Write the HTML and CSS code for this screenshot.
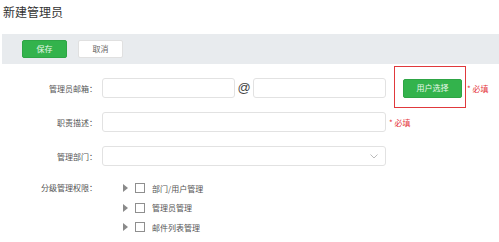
FILE: index.html
```html
<!DOCTYPE html>
<html>
<head>
<meta charset="utf-8">
<link rel="stylesheet" href="styles.css">
</head>
<body>
<h1 class="title">新建管理员</h1>
<div class="toolbar">
  <button class="btn btn-green">保存</button>
  <button class="btn btn-white">取消</button>
</div>
<div class="form">
  <div class="row">
    <label class="lbl">管理员邮箱：</label>
    <input class="inp inp-half" type="text">
    <span class="at">@</span>
    <input class="inp inp-half" type="text">
    <div class="pick-wrap">
      <button class="btn btn-green btn-pick">用户选择</button>
      <span class="highlight"></span>
    </div>
    <span class="req">* 必填</span>
  </div>
  <div class="row">
    <label class="lbl">职责描述：</label>
    <input class="inp inp-full" type="text">
    <span class="req req-near">* 必填</span>
  </div>
  <div class="row">
    <label class="lbl">管理部门：</label>
    <div class="inp inp-full select">
      <svg class="chev" width="8" height="5" viewBox="0 0 8 5"><path d="M0.5 0.5 L4 4 L7.5 0.5" fill="none" stroke="#bbb" stroke-width="1"/></svg>
    </div>
  </div>
  <div class="row row-top">
    <label class="lbl lbl-perm">分级管理权限：</label>
    <ul class="tree">
      <li><span class="tri"></span><span class="cb"></span><span class="txt">部门/用户管理</span></li>
      <li><span class="tri"></span><span class="cb"></span><span class="txt">管理员管理</span></li>
      <li><span class="tri"></span><span class="cb"></span><span class="txt">邮件列表管理</span></li>
    </ul>
  </div>
</div>
</body>
</html>
```

FILE: styles.css
```css
* { box-sizing: border-box; }
body {
  margin: 0;
  background: #fff;
  font-family: "Noto Sans CJK SC", "Liberation Sans", sans-serif;
  color: #555;
  width: 499px;
  height: 242px;
  overflow: hidden;
}
.title {
  margin: 0;
  padding: 3px 0 0 3px;
  height: 34px;
  font-size: 12px;
  line-height: 18px;
  font-weight: normal;
  color: #333;
}
.toolbar {
  margin-left: 2px;
  height: 30px;
  background: #e8ebee;
  display: flex;
  align-items: center;
  padding-left: 20px;
  gap: 11px;
}
.btn {
  font-family: inherit;
  font-size: 8px;
  height: 18px;
  border-radius: 2px;
  padding: 0;
  line-height: 16px;
  cursor: pointer;
}
.btn-green {
  width: 45px;
  background: #33b34c;
  border: 1px solid #2ea545;
  color: #e8f8ea;
}
.btn-white {
  width: 45px;
  background: #fff;
  border: 1px solid #e0e0e0;
  color: #666;
}
.form {
  padding-top: 14px;
}
.row {
  display: flex;
  align-items: center;
  height: 20px;
  margin-bottom: 14px;
}
.row-top {
  align-items: flex-start;
  height: auto;
  margin-top: 1px;
  margin-bottom: 0;
}
.lbl {
  width: 97px;
  text-align: right;
  font-size: 8px;
  color: #555;
  margin-right: 5px;
  flex: none;
}
.lbl-perm {
  line-height: 16px;
}
.inp {
  height: 20px;
  border: 1px solid #e2e2e2;
  border-radius: 3px;
  background: #fff;
  outline: none;
  flex: none;
}
.inp-half { width: 133px; }
.inp-full { width: 284px; }
.at {
  width: 18px;
  text-align: center;
  font-size: 13px;
  color: #444;
  font-family: "Liberation Sans", sans-serif;
  line-height: 20px;
}
.pick-wrap {
  position: relative;
  margin-left: 17px;
  flex: none;
}
.btn-pick {
  width: 59px;
  height: 19px;
  display: block;
}
.highlight {
  position: absolute;
  left: -9px;
  top: -13px;
  width: 72px;
  height: 42px;
  border: 1.5px solid #e0393c;
  pointer-events: none;
}
.req {
  margin-left: 5px;
  font-size: 8px;
  color: #e5343a;
}
.req-near { margin-left: 3px; }
.select {
  position: relative;
  display: flex;
  align-items: center;
  justify-content: flex-end;
  padding-right: 7px;
}
.tree {
  list-style: none;
  margin: 0 0 0 21px;
  padding: 0;
}
.tree li {
  display: flex;
  align-items: center;
  height: 16px;
  margin-bottom: 3.5px;
}
.tri {
  width: 0;
  height: 0;
  border-top: 4px solid transparent;
  border-bottom: 4px solid transparent;
  border-left: 5px solid #8a8a8a;
  margin-right: 7px;
}
.cb {
  width: 10px;
  height: 10px;
  border: 1px solid #8f8f8f;
  background: #fff;
  margin-right: 7px;
}
.txt {
  font-size: 8px;
  color: #555;
}
```
